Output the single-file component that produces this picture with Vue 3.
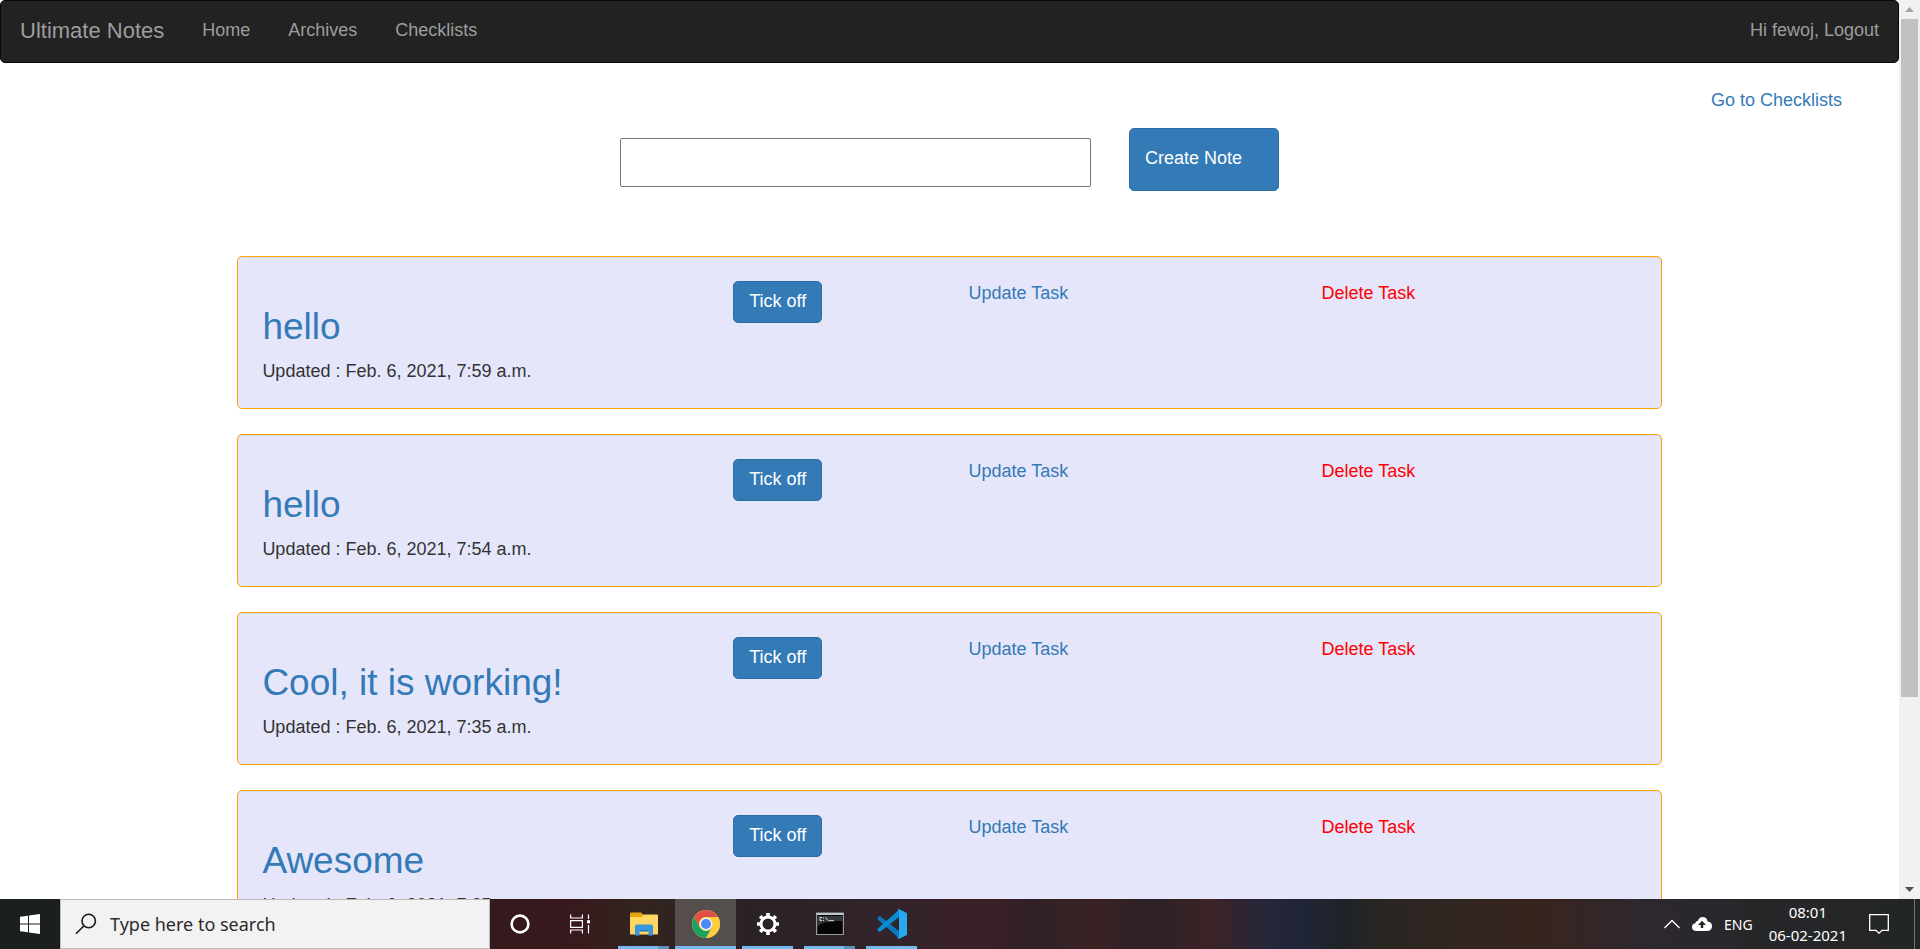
<script setup>
import { ref } from 'vue'

const title = ref('')
const query = ref('')
const notes = [
  { id: 4, title: 'hello', updated: 'Feb. 6, 2021, 7:59 a.m.' },
  { id: 3, title: 'hello', updated: 'Feb. 6, 2021, 7:54 a.m.' },
  { id: 2, title: 'Cool, it is working!', updated: 'Feb. 6, 2021, 7:35 a.m.' },
  { id: 1, title: 'Awesome', updated: 'Feb. 6, 2021, 7:25 a.m.' },
]
</script>

<template>
  <div class="desktop">
    <div class="window">
      <div class="page">
        <nav class="navbar">
          <a class="brand" href="#">Ultimate Notes</a>
          <a href="#">Home</a>
          <a href="#">Archives</a>
          <a href="#">Checklists</a>
          <a class="logout" href="#">Hi fewoj, Logout</a>
        </nav>
        <main>
          <div class="shortcut"><a href="#">Go to Checklists</a></div>
          <form class="create" @submit.prevent>
            <input v-model="title" type="text" aria-label="Note title">
            <button class="btn large" type="submit">Create Note</button>
          </form>
          <section class="notes">
            <article v-for="note in notes" :key="note.id" class="note">
              <div>
                <h2><a href="#">{{ note.title }}</a></h2>
                <p>Updated : {{ note.updated }}</p>
              </div>
              <div><button class="btn" type="button">Tick off</button></div>
              <div><a href="#">Update Task</a></div>
              <div><a class="danger" href="#">Delete Task</a></div>
            </article>
          </section>
        </main>
      </div>
      <div class="scrollbar" aria-hidden="true">
        <svg width="21" height="19" viewBox="0 0 21 19"><path d="M6 12L10.500 7L15 12Z" fill="#a3a3a3" /></svg>
        <div class="track"><div class="thumb"></div></div>
        <svg width="21" height="19" viewBox="0 0 21 19"><path d="M6 7L10.500 12L15 7Z" fill="#505050" /></svg>
      </div>
    </div>

    <footer class="taskbar">
      <button class="start" type="button" aria-label="Start">
        <svg width="20" height="20" viewBox="0 0 20 20" fill="#fff"><path d="M0 2.800L8 1.700V9.400H0ZM9 1.500L20 0V9.400H9ZM0 10.500H8V18.300L0 17.200ZM9 10.500H20V20L9 18.500Z" /></svg>
      </button>
      <label class="search">
        <svg width="22" height="22" viewBox="0 0 22 22" fill="none" stroke="#1a1a1a" stroke-width="1.600"><circle cx="13.700" cy="8" r="6.700" /><path d="M9 12.800L1 20.800" /></svg>
        <input v-model="query" type="text" placeholder="Type here to search" aria-label="Type here to search">
      </label>
      <button class="tool" type="button" aria-label="Cortana">
        <svg width="20" height="20" viewBox="0 0 20 20" fill="none" stroke="#fff" stroke-width="2.600"><circle cx="10" cy="10" r="8.400" /></svg>
      </button>
      <button class="tool" type="button" aria-label="Task view">
        <svg width="20" height="20" viewBox="0 0 20 20" fill="none" stroke="#fff" stroke-width="1.200"><path d="M.6 .5V4H12.400V.5M.6 19.500V16H12.400V19.500M.6 6.600H12.400V13.400H.6ZM18.500 .5V5M18.500 11V19.500" /><path d="M17 6.200H20V9.300H17Z" fill="#fff" stroke="none" /></svg>
      </button>
      <div class="apps">
        <button class="app stacked" type="button" aria-label="File Explorer">
          <svg width="28" height="24" viewBox="0 0 28 24">
            <path d="M0 1.500Q0 .5 1 .5H11L13.500 3H27Q28 3 28 4V8H0Z" fill="#e5a50d" />
            <path d="M0 5H11.500L13.500 2.500H27Q28 2.500 28 3.500V21.500Q28 22.500 27 22.500H1Q0 22.500 0 21.500Z" fill="#ffd661" />
            <path d="M5 23.500V14.500Q5 12.500 7 12.500H21Q23 12.500 23 14.500V23.500H18.500V18H9.500V23.500Z" fill="#3796de" />
            <path d="M9.500 18H18.500V19.500H9.500Z" fill="#1979c6" />
          </svg>
        </button>
        <button class="app active" type="button" aria-label="Google Chrome">
          <svg width="28" height="28" viewBox="0 0 28 28">
            <circle cx="14" cy="14" r="14" fill="#ffcd40" />
            <path d="M1.880 7A14 14 0 0 0 14 28L20.060 17.500H14L7.940 17.500Z" fill="#1aa260" />
            <path d="M1.880 7A14 14 0 0 1 26.120 7H14A7 7 0 0 0 7.940 17.500Z" fill="#de5246" />
            <circle cx="14" cy="14" r="7" fill="#ffcd40" />
            <path d="M14 7H26.120A14 14 0 0 1 14 28L20.060 17.500A7 7 0 0 0 14 7Z" fill="#ffcd40" />
            <circle cx="14" cy="14" r="6.400" fill="#f1f1f1" />
            <circle cx="14" cy="14" r="5" fill="#4c8bf5" />
          </svg>
        </button>
        <button class="app" type="button" aria-label="Settings">
          <svg width="24" height="24" viewBox="0 0 24 24" fill="none" stroke="#fff">
            <circle cx="12" cy="12" r="7" stroke-width="3" />
            <path d="M12 4.500V1M12 19.500V23M4.500 12H1M19.500 12H23M6.700 6.700L4.200 4.200M17.300 6.700L19.800 4.200M6.700 17.300L4.200 19.800M17.300 17.300L19.800 19.800" stroke-width="3.600" />
          </svg>
        </button>
        <button class="app stacked" type="button" aria-label="Command Prompt">
          <svg width="28" height="24" viewBox="0 0 28 24">
            <path d="M.6 1H27.400V22.500H.6Z" fill="#050505" stroke="#989b9e" stroke-width="1.200" />
            <path d="M1.200 4H26.800V9Q6 8 1.200 15Z" fill="#35383a" />
            <path d="M.6 1H27.400V3H.6Z" fill="#c1c6ca" />
            <path d="M6 5.500H4V8.500H6M7.500 5.500V6.500M7.500 8V9M9.500 5.500L12 8.500M12.500 8.700H18" fill="none" stroke="#ddd" />
          </svg>
        </button>
        <button class="app" type="button" aria-label="Visual Studio Code">
          <svg width="30" height="30" viewBox="0 0 30 30">
            <path d="M3.200 7.200L22 22V29.300L.8 10.500Q0 9.700 .8 8.800L2 7.500Q2.600 6.900 3.200 7.200Z" fill="#0879be" />
            <path d="M3.200 22.800L22 8V.7L.8 19.500Q0 20.300 .8 21.200L2 22.500Q2.600 23.100 3.200 22.800Z" fill="#0a8bd5" />
            <path d="M22 .2L29 3.500Q30 4 30 5V25Q30 26 29 26.500L22 29.800Q21 30 20.500 29L22 27V3L20.500 1Q21 0 22 .2Z" fill="#27a9f2" />
          </svg>
        </button>
      </div>
      <div class="tray">
        <svg width="16" height="10" viewBox="0 0 16 10" fill="none" stroke="#fff" stroke-width="1.300"><path d="M.5 9L8 1.500L15.500 9" /></svg>
        <svg width="20" height="14" viewBox="0 0 20 14"><path d="M4.500 14Q0 13.800 0 10Q0 6.800 3.300 6.200Q3.600 3.800 6 3.700Q7.200 0 10.600 0Q14.700 0 15.600 4.400Q20 5 20 9Q20 13.600 15.500 14Z" fill="#fff" /><path d="M10 3.800L14 8H11.200V11H8.800V8H6Z" fill="#252528" /></svg>
        <span>ENG</span>
        <div class="clock"><time>08:01</time><time>06-02-2021</time></div>
        <svg width="20" height="20" viewBox="0 0 20 20" fill="none" stroke="#fff" stroke-width="1.300"><path d="M.7 .7H19.300V16.300H13L10 19.200L7 16.300H.7Z" /></svg>
        <i class="peek"></i>
      </div>
    </footer>
  </div>
</template>

<style>
body { margin: 0; overflow: hidden; }
</style>

<style scoped>
* { box-sizing: border-box; }
.desktop {
  height: 100vh;
  display: flex;
  flex-direction: column;
  background: #fff;
  color: #333;
  font: 18px/25px "Liberation Sans", Arial, sans-serif;
}
a { color: #337ab7; text-decoration: none; }
button, input { font: inherit; }
.window { flex: 1; min-height: 0; display: flex; }
.page { flex: 1; min-width: 0; overflow: hidden; }
.navbar {
  display: flex;
  padding: 17px 0 19px;
  background: #222;
  border: 1px solid #080808;
  border-radius: 5px;
}
.navbar a { padding: 0 19px; color: #9d9d9d; }
.navbar .brand { font-size: 22px; }
.navbar .logout { margin-left: auto; }
.shortcut { padding: 25px 57px 0 0; text-align: right; line-height: 24px; }
.create { display: flex; justify-content: center; gap: 38px; margin-top: 16px; }
.create input {
  width: 471px;
  height: 49px;
  margin-top: 10px;
  padding: 2px 8px;
  border: 1px solid #767676;
  border-radius: 2px;
}
.btn {
  display: block;
  height: 42px;
  padding: 0 15px 2px;
  color: #fff;
  background: #337ab7;
  border: 1px solid #2e6da4;
  border-radius: 5px;
}
.btn.large { width: 150px; height: 63px; text-align: left; }
.notes { width: 75%; margin: 65px auto 0; }
.note {
  display: grid;
  grid-template-columns: 4fr 2fr 3fr 3fr;
  margin-bottom: 25px;
  padding: 24px 5px;
  background: #e6e6fa;
  border: 1px solid orange;
  border-radius: 5px;
  box-shadow: inset 0 1px 1px rgba(0, 0, 0, 0.05);
}
.note > div { padding: 0 19px; }
h2 { margin: 25px 0 12px; font-size: 37px; font-weight: 400; line-height: 41px; }
p { margin: 0; }
.danger { color: red; }

.scrollbar { width: 21px; display: flex; flex-direction: column; background: #f1f1f1; }
.track { flex: 1; padding: 0 2px; }
.thumb { height: 78.7%; background: #c1c1c1; }

.taskbar {
  height: 50px;
  display: flex;
  color: #fff;
  font-family: "Noto Sans", "Open Sans", sans-serif;
  background: linear-gradient(90deg, #1c1f1f 0, #1c1f1f 3%, #34191c 25%, #38191d 30%, #32241f 33%, #2b2226 39%, #32242a 47%, #3b1f26 51%, #2f2227 54%, #3a2224 57%, #2c2126 60%, #3c2326 63%, #25263a 66%, #202536 68%, #1f2326 70%, #2a2622 72%, #38241f 80%, #2d282e 86%, #27272a 91%, #222526 100%);
}
.taskbar button {
  display: flex;
  align-items: center;
  justify-content: center;
  padding: 0;
  border: 0;
  background: none;
}
.taskbar .start, .taskbar .tool { width: 60px; }
.search {
  width: 430px;
  display: flex;
  align-items: center;
  gap: 13px;
  padding: 0 14px;
  background: #f2f2f2;
  border: 1px solid #bbb;
}
.search input { flex: 1; min-width: 0; padding: 0; border: 0; outline: 0; background: none; color: #2b2b2b; }
.search input::placeholder { color: #2b2b2b; opacity: 1; }
.apps { display: flex; gap: 1px; margin-left: 3px; }
.taskbar .app { position: relative; width: 61px; }
.app::after {
  content: "";
  position: absolute;
  bottom: 0;
  left: 5px;
  right: 5px;
  height: 3px;
  background: #76b9ed;
}
.stacked::after { background: linear-gradient(90deg, #76b9ed 40px, #5c93be 40px); }
.taskbar .active { background: #544e4c; }
.active::after { left: 0; right: 0; }
.tray { display: flex; align-items: center; gap: 12px; margin-left: auto; font-size: 14px; }
.clock { display: flex; flex-direction: column; align-items: center; margin: 0 10px 0 4px; font-size: 15px; line-height: 23px; }
.peek { align-self: stretch; margin: 0 5px 0 13px; border-left: 1px solid #777; }
</style>
